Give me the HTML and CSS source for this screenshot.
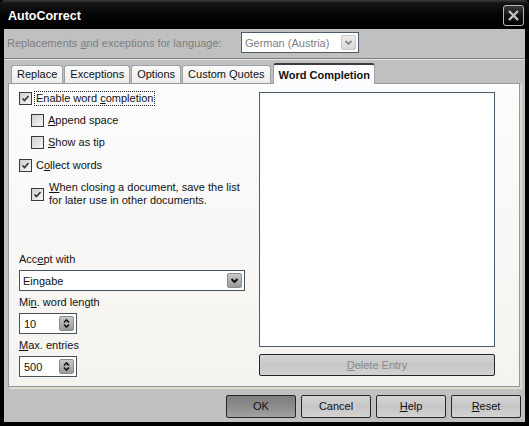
FILE: index.html
```html
<!DOCTYPE html>
<html lang="en">
<head>
    <meta charset="UTF-8">
    <title>AutoCorrect</title>
    <link rel="stylesheet" href="styles.css">
</head>
<body>
    <div class="window">
        <div class="titlebar">
            <span class="title">AutoCorrect</span>
            <div class="close">
                <svg width="13" height="13" viewBox="0 0 13 13"><path d="M2 2 L11 11 M11 2 L2 11" stroke="#c4c4c4" stroke-width="2.4" fill="none"/></svg>
            </div>
        </div>

        <div class="client">
            <div class="lang-row">
                <span class="muted">Replacements <u>a</u>nd exceptions for language:</span>
                <div class="combo disabled lang-combo">
                    <span class="combo-text">German (Austria)</span>
                    <span class="drop">
                        <svg width="13" height="13" viewBox="0 0 13 13"><path d="M3.5 5 L6.5 8 L9.5 5" stroke="#8a8a8a" stroke-width="1.8" fill="none"/></svg>
                    </span>
                </div>
            </div>
            <div class="sep"></div>

            <div class="tabs">
                <div class="tab">Replace</div>
                <div class="tab">Exceptions</div>
                <div class="tab">Options</div>
                <div class="tab">Custom Quotes</div>
                <div class="tab active">Word Completion</div>
            </div>

            <div class="panel">
                <div class="left">
                    <div class="check-row">
                        <span class="box"><svg width="11" height="11" viewBox="0 0 11 11"><path d="M2.5 5.5 L4.5 7.5 L8.5 3" stroke="#333" stroke-width="1.6" fill="none"/></svg></span>
                        <span class="label focus">Enable word <u>c</u>ompletion</span>
                    </div>
                    <div class="check-row sub">
                        <span class="box"></span>
                        <span class="label"><u>A</u>ppend space</span>
                    </div>
                    <div class="check-row sub">
                        <span class="box"></span>
                        <span class="label"><u>S</u>how as tip</span>
                    </div>
                    <div class="check-row gap">
                        <span class="box"><svg width="11" height="11" viewBox="0 0 11 11"><path d="M2.5 5.5 L4.5 7.5 L8.5 3" stroke="#333" stroke-width="1.6" fill="none"/></svg></span>
                        <span class="label">C<u>o</u>llect words</span>
                    </div>
                    <div class="check-row sub two">
                        <span class="box"><svg width="11" height="11" viewBox="0 0 11 11"><path d="M2.5 5.5 L4.5 7.5 L8.5 3" stroke="#333" stroke-width="1.6" fill="none"/></svg></span>
                        <span class="label"><u>W</u>hen closing a document, save the list<br>for later use in other documents.</span>
                    </div>

                    <div class="bottom-group">
                        <div class="field-label">Acc<u>e</u>pt with</div>
                        <div class="combo accept">
                            <span class="combo-text">Eingabe</span>
                            <span class="drop">
                                <svg width="13" height="13" viewBox="0 0 13 13"><path d="M3.5 5 L6.5 8 L9.5 5" stroke="#111" stroke-width="2" fill="none"/></svg>
                            </span>
                        </div>
                        <div class="field-label">Mi<u>n</u>. word length</div>
                        <div class="spin">
                            <span class="combo-text">10</span>
                            <span class="drop">
                                <svg width="13" height="13" viewBox="0 0 13 13"><path d="M4 5.5 L6.5 3 L9 5.5 M4 7.5 L6.5 10 L9 7.5" stroke="#111" stroke-width="1.6" fill="none"/></svg>
                            </span>
                        </div>
                        <div class="field-label"><u>M</u>ax. entries</div>
                        <div class="spin">
                            <span class="combo-text">500</span>
                            <span class="drop">
                                <svg width="13" height="13" viewBox="0 0 13 13"><path d="M4 5.5 L6.5 3 L9 5.5 M4 7.5 L6.5 10 L9 7.5" stroke="#111" stroke-width="1.6" fill="none"/></svg>
                            </span>
                        </div>
                    </div>
                </div>

                <div class="right">
                    <div class="listbox"></div>
                    <div class="btn wide disabled"><u>D</u>elete Entry</div>
                </div>
            </div>

            <div class="buttons">
                <div class="btn default">OK</div>
                <div class="btn">Cancel</div>
                <div class="btn"><u>H</u>elp</div>
                <div class="btn"><u>R</u>eset</div>
            </div>
        </div>
    </div>
</body>
</html>
```

FILE: styles.css
```css
* {
    margin: 0;
    padding: 0;
    box-sizing: border-box;
}

body {
    font-family: 'Liberation Sans', Arial, sans-serif;
    font-size: 11px;
    color: #111;
    background: #000;
}

.window {
    width: 529px;
    height: 426px;
    background: #000;
    display: flex;
    flex-direction: column;
}

.titlebar {
    height: 29px;
    display: flex;
    align-items: center;
    justify-content: space-between;
    padding: 0 5px 0 8px;
    background: linear-gradient(#3c3c3c 0, #151515 3px, #050505 14px, #000 100%);
    border-radius: 5px 5px 0 0;
}

.title {
    color: #fff;
    font-weight: bold;
    font-size: 12.5px;
    margin-top: 3px;
}

.close {
    width: 21px;
    height: 21px;
    margin-top: 2px;
    border: 1px solid #b8b8b8;
    border-radius: 3px;
    background: linear-gradient(#3a3a3a, #141414 50%, #000);
    display: flex;
    align-items: center;
    justify-content: center;
}

.client {
    flex: 1;
    margin: 0 4px 4px 4px;
    background: #c0c0c0;
    display: flex;
    flex-direction: column;
}

.lang-row {
    display: flex;
    align-items: center;
    padding: 3px 0 0 3px;
    height: 24px;
}

.muted {
    color: #7e7e7e;
    width: 234px;
}

.sep {
    margin-top: 5px;
    height: 2px;
    border-top: 1px solid #7c7c7c;
    border-bottom: 1px solid #e6e6e6;
}

/* combo boxes */
.combo, .spin {
    height: 21px;
    background: #fff;
    border: 1px solid #45525c;
    display: flex;
    align-items: center;
    justify-content: space-between;
    padding: 0 2px 0 3px;
}

.lang-combo {
    width: 118px;
    border-color: #4b5a66;
}

.combo.disabled .combo-text {
    color: #7e7e7e;
}

.drop {
    width: 15px;
    height: 15px;
    border: 1px solid #8c8c8c;
    border-radius: 2px;
    background: linear-gradient(#c9c9c9, #9a9a9a);
    display: flex;
    align-items: center;
    justify-content: center;
}

.disabled .drop {
    border-color: #c6c6c6;
    background: linear-gradient(#eeeeee, #d8d8d8);
}

.accept {
    width: 226px;
}

.spin {
    width: 58px;
    padding-left: 4px;
}

/* tabs */
.tabs {
    margin: 4px 0 0 7px;
    height: 19px;
    display: flex;
    align-items: flex-end;
    gap: 1px;
    position: relative;
    z-index: 1;
}

.tab {
    height: 18px;
    padding: 0 5px;
    line-height: 17px;
    background: linear-gradient(#fbfbfb, #ececec);
    border: 1px solid #9aa2a6;
    border-bottom: none;
    border-radius: 3px 3px 0 0;
}

.tab.active {
    height: 21px;
    margin-bottom: -1px;
    margin-left: 1px;
    padding: 0 4px 0 5px;
    font-weight: bold;
    line-height: 20px;
    background: #fcfcfe;
    border-top: 2px solid #3d3d3d;
}

/* panel */
.panel {
    flex: 1;
    margin: 0 5px 0 4px;
    border: 1px solid #919b9c;
    box-shadow: 1px 1px 0 #d9d6c6, 2px 2px 0 #e4e1d2;
    background: linear-gradient(#fcfcfe, #f4f3ee);
    display: grid;
    grid-template-columns: 226px 236px;
    column-gap: 14px;
    padding: 8px 24px 9px 10px;
}

.left {
    display: flex;
    flex-direction: column;
}

.check-row {
    display: flex;
    align-items: center;
    gap: 3px;
    line-height: 13px;
    margin-top: 9px;
}

.check-row:first-child {
    margin-top: 0;
}

.check-row.sub {
    margin-left: 12px;
}

.check-row.gap {
    margin-top: 10px;
}

.check-row.two {
    margin-top: 9px;
}

.box {
    width: 13px;
    height: 13px;
    flex-shrink: 0;
    border: 1px solid #3b3b3b;
    background: linear-gradient(135deg, #cfcfcf, #f6f6f6);
    display: flex;
    align-items: center;
    justify-content: center;
}

.label {
    padding: 0 1px;
}

.two .label {
    margin-left: 1px;
}

.focus {
    outline: 1px dotted #222;
}

.bottom-group {
    margin-top: auto;
    display: flex;
    flex-direction: column;
}

.field-label {
    line-height: 13px;
    margin-bottom: 4px;
}

.bottom-group .combo,
.bottom-group .spin {
    margin-bottom: 5px;
}

.bottom-group .spin:last-child {
    margin-bottom: 0;
}

.right {
    display: flex;
    flex-direction: column;
}

.listbox {
    flex: 1;
    background: #fff;
    border: 1px solid #4b5b68;
}

/* buttons */
.btn {
    width: 70px;
    height: 23px;
    border: 1px solid #262626;
    border-radius: 2px;
    background: linear-gradient(#d4d4d4, #c6c6c6 50%, #d2d2d2);
    text-align: center;
    line-height: 21px;
    font-size: 11px;
}

.btn.default {
    background: linear-gradient(#7e7e7e, #8c8c8c 50%, #a2a2a2);
}

.btn.wide {
    width: auto;
    height: 22px;
    margin: 7px 0 1px 0;
    line-height: 20px;
}

.btn.disabled {
    color: #8a8a8a;
}

.buttons {
    display: flex;
    justify-content: flex-end;
    gap: 5px;
    margin: 8px 4px 4px 0;
}
```
